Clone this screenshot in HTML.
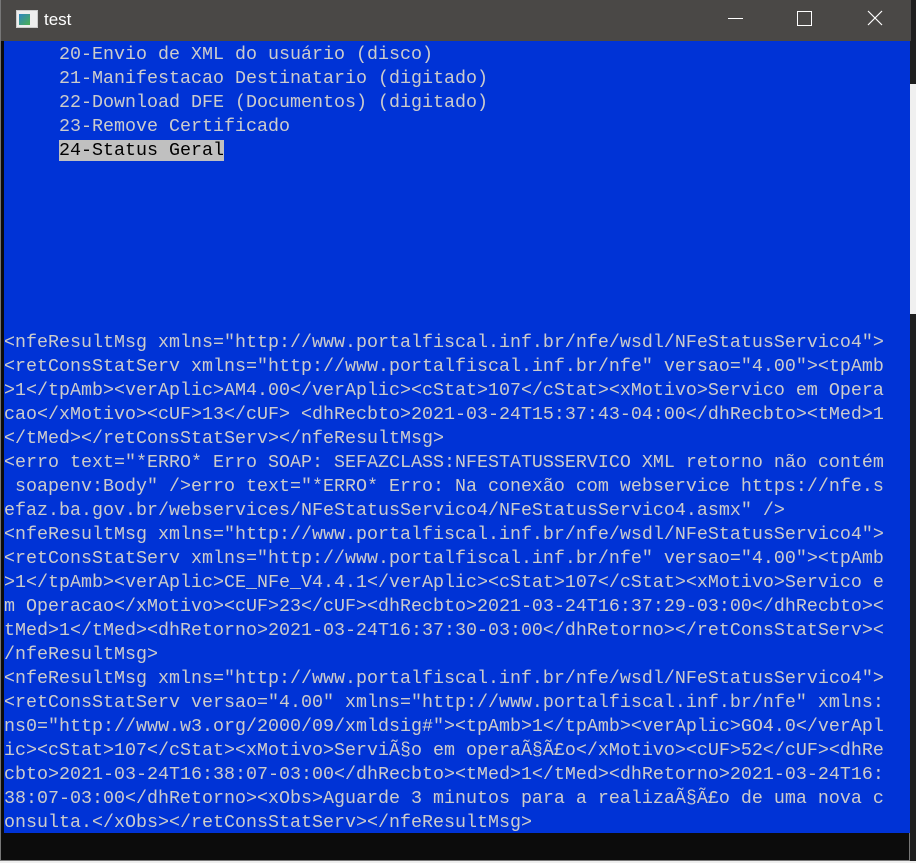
<!DOCTYPE html>
<html><head><meta charset="utf-8"><style>
html,body{margin:0;padding:0;width:916px;height:863px;overflow:hidden;background:#2b2b2b;}
.win{position:absolute;left:0;top:0;width:910px;height:861px;background:#0c0c0c;border-left:1px solid #777;border-right:1px solid #777;border-bottom:1px solid #777;box-sizing:border-box;}
.title{position:absolute;left:0;top:0;width:910px;height:41px;background:#4a4846;}
.title .t{position:absolute;left:43px;top:10px;color:#fff;font:17px "Liberation Sans",sans-serif;}
.ico{position:absolute;left:15px;top:10px;width:20px;height:16px;background:#eee;border:1px solid #ccc;}
.ico:before{content:"";position:absolute;left:2px;top:3px;width:11px;height:11px;background:linear-gradient(135deg,#2e86c1,#4caf50);}
.min{position:absolute;left:727px;top:18px;width:15px;height:1px;background:#fff;}
.max{position:absolute;left:796px;top:11px;width:13px;height:13px;border:1px solid #fff;}
.cls{position:absolute;left:866px;top:10px;}
.con{position:absolute;left:3px;top:41px;width:906px;height:792px;background:#0033d6;}
pre{margin:0;padding-top:2px;font:18.33px/24px "Liberation Mono",monospace;color:#cccccc;white-space:pre;}
.hl{background:#c0c0c0;color:#000;}
.side{position:absolute;left:910px;top:0;width:6px;height:863px;background:#1f1f1f;}
.bot{position:absolute;left:0;top:861px;width:916px;height:2px;background:#eee;}
</style></head><body>
<div class="side"></div>
<div style="position:absolute;left:910px;top:84px;width:6px;height:230px;background:#f0f0f0"></div>
<div class="win">
<div class="title"><div class="ico"></div><div class="t">test</div><div class="min"></div><div class="max"></div>
<svg class="cls" width="16" height="16"><path d="M1 1L15 15M15 1L1 15" stroke="#fff" stroke-width="1.2"/></svg></div>
<div class="con"><pre>     20-Envio de XML do usuário (disco)
     21-Manifestacao Destinatario (digitado)
     22-Download DFE (Documentos) (digitado)
     23-Remove Certificado
     <span class="hl">24-Status Geral</span>







&lt;nfeResultMsg xmlns="http://www.portalfiscal.inf.br/nfe/wsdl/NFeStatusServico4"&gt;
&lt;retConsStatServ xmlns="http://www.portalfiscal.inf.br/nfe" versao="4.00"&gt;&lt;tpAmb
&gt;1&lt;/tpAmb&gt;&lt;verAplic&gt;AM4.00&lt;/verAplic&gt;&lt;cStat&gt;107&lt;/cStat&gt;&lt;xMotivo&gt;Servico em Opera
cao&lt;/xMotivo&gt;&lt;cUF&gt;13&lt;/cUF&gt; &lt;dhRecbto&gt;2021-03-24T15:37:43-04:00&lt;/dhRecbto&gt;&lt;tMed&gt;1
&lt;/tMed&gt;&lt;/retConsStatServ&gt;&lt;/nfeResultMsg&gt;
&lt;erro text="*ERRO* Erro SOAP: SEFAZCLASS:NFESTATUSSERVICO XML retorno não contém
 soapenv:Body" /&gt;erro text="*ERRO* Erro: Na conexão com webservice https://nfe.s
efaz.ba.gov.br/webservices/NFeStatusServico4/NFeStatusServico4.asmx" /&gt;
&lt;nfeResultMsg xmlns="http://www.portalfiscal.inf.br/nfe/wsdl/NFeStatusServico4"&gt;
&lt;retConsStatServ xmlns="http://www.portalfiscal.inf.br/nfe" versao="4.00"&gt;&lt;tpAmb
&gt;1&lt;/tpAmb&gt;&lt;verAplic&gt;CE_NFe_V4.4.1&lt;/verAplic&gt;&lt;cStat&gt;107&lt;/cStat&gt;&lt;xMotivo&gt;Servico e
m Operacao&lt;/xMotivo&gt;&lt;cUF&gt;23&lt;/cUF&gt;&lt;dhRecbto&gt;2021-03-24T16:37:29-03:00&lt;/dhRecbto&gt;&lt;
tMed&gt;1&lt;/tMed&gt;&lt;dhRetorno&gt;2021-03-24T16:37:30-03:00&lt;/dhRetorno&gt;&lt;/retConsStatServ&gt;&lt;
/nfeResultMsg&gt;
&lt;nfeResultMsg xmlns="http://www.portalfiscal.inf.br/nfe/wsdl/NFeStatusServico4"&gt;
&lt;retConsStatServ versao="4.00" xmlns="http://www.portalfiscal.inf.br/nfe" xmlns:
ns0="http://www.w3.org/2000/09/xmldsig#"&gt;&lt;tpAmb&gt;1&lt;/tpAmb&gt;&lt;verAplic&gt;GO4.0&lt;/verApl
ic&gt;&lt;cStat&gt;107&lt;/cStat&gt;&lt;xMotivo&gt;ServiÃ§o em operaÃ§Ã£o&lt;/xMotivo&gt;&lt;cUF&gt;52&lt;/cUF&gt;&lt;dhRe
cbto&gt;2021-03-24T16:38:07-03:00&lt;/dhRecbto&gt;&lt;tMed&gt;1&lt;/tMed&gt;&lt;dhRetorno&gt;2021-03-24T16:
38:07-03:00&lt;/dhRetorno&gt;&lt;xObs&gt;Aguarde 3 minutos para a realizaÃ§Ã£o de uma nova c
onsulta.&lt;/xObs&gt;&lt;/retConsStatServ&gt;&lt;/nfeResultMsg&gt;</pre></div>
</div>
<div class="bot"></div>
</body></html>
